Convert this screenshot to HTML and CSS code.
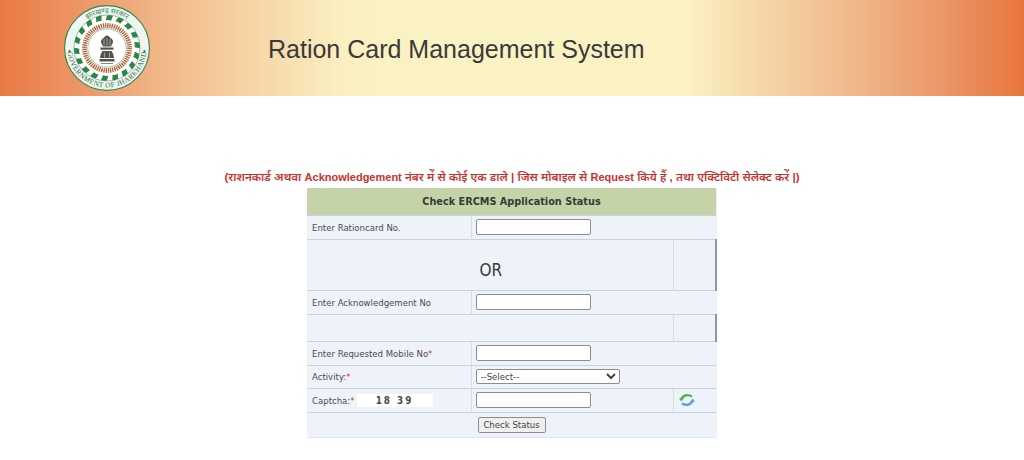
FILE: index.html
```html
<!DOCTYPE html>
<html lang="hi">
<head>
<meta charset="utf-8">
<title>Ration Card Management System</title>
<link rel="stylesheet" href="styles.css">
</head>
<body>
<header class="banner">
  <svg class="logo" viewBox="0 0 86 86" width="86" height="86" aria-label="Government of Jharkhand seal">
    <defs>
      <path id="arcTop" d="M8 43a35 35 0 0 1 70 0"/>
      <path id="arcBottom" d="M3.500 43a39.500 39.500 0 0 0 79 0"/>
      <path id="leaf" d="M43 10.500c2.500-.6 4.500-.4 6 .4l-2 4.800c-1.800-.7-3.600-.9-5.200-.6z" fill="#2a8547"/>
    </defs>
    <circle cx="43" cy="43" r="42.400" fill="#eef6ef" stroke="#2f8a4e" stroke-width="1.100"/>
    <text class="seal-text"><textPath href="#arcTop" startOffset="50%" text-anchor="middle">झारखण्ड सरकार</textPath></text>
    <text class="seal-text seal-en"><textPath href="#arcBottom" startOffset="50%" text-anchor="middle">GOVERNMENT OF JHARKHAND</textPath></text>
    <circle cx="43" cy="43" r="33" fill="#fff" stroke="#2f8a4e" stroke-width="0.500"/>
    <g>
      <use href="#leaf"/><use href="#leaf" transform="rotate(20 43 43)"/><use href="#leaf" transform="rotate(40 43 43)"/>
      <use href="#leaf" transform="rotate(60 43 43)"/><use href="#leaf" transform="rotate(80 43 43)"/><use href="#leaf" transform="rotate(100 43 43)"/>
      <use href="#leaf" transform="rotate(120 43 43)"/><use href="#leaf" transform="rotate(140 43 43)"/><use href="#leaf" transform="rotate(160 43 43)"/>
      <use href="#leaf" transform="rotate(180 43 43)"/><use href="#leaf" transform="rotate(200 43 43)"/><use href="#leaf" transform="rotate(220 43 43)"/>
      <use href="#leaf" transform="rotate(240 43 43)"/><use href="#leaf" transform="rotate(260 43 43)"/><use href="#leaf" transform="rotate(280 43 43)"/>
      <use href="#leaf" transform="rotate(300 43 43)"/><use href="#leaf" transform="rotate(320 43 43)"/><use href="#leaf" transform="rotate(340 43 43)"/>
    </g>
    <circle cx="43" cy="43" r="22.500" fill="none" stroke="#c7623a" stroke-width="4.800" stroke-dasharray="1.300 .9"/>
    <circle cx="43" cy="43" r="22.500" fill="none" stroke="#3c8a52" stroke-width="1.200" stroke-dasharray="1.300 3.100"/>
    <circle cx="43" cy="43" r="19.200" fill="#fff" stroke="#2f8a4e" stroke-width="0.500"/>
    <circle cx="5.500" cy="46" r="1.100" fill="#2f6e45"/>
    <circle cx="80.500" cy="46" r="1.100" fill="#2f6e45"/>
    <g transform="translate(0 1.500)">
      <g fill="#55554f">
        <path d="M37 35.500c-.3-2.300 1.700-3.700 3-4.200.5-1.200 1.600-2.300 3-2.300s2.500 1.100 3 2.300c1.300.5 3.300 1.900 3 4.200-.2 1.700-1.400 3-2 4.500h-8c-.6-1.500-1.800-2.800-2-4.500z"/>
        <path d="M36.500 41h13v2.200h-13z"/>
        <path d="M38.500 44.500h9c1.400 2 2.300 4.300 2.500 7h-14c.2-2.700 1.100-5 2.500-7z"/>
        <path d="M35.500 52.500h15v2.500h-15z"/>
        <path d="M37 56.500h12v1h-12z" fill="#85847e"/>
      </g>
      <path d="M40 32.500v6.500M43 31.500v7.500M46 32.500v6.500M40.500 46v5M45.500 46v5" stroke="#f0f0ec" stroke-width=".5" fill="none"/>
    </g>
  </svg>
  <h1 class="title">Ration Card Management System</h1>
</header>
<main class="content">
  <p class="notice">(राशनकार्ड अथवा <b>Acknowledgement</b> नंबर में से कोई एक डाले | जिस मोबाइल से <b>Request</b> किये हैं , तथा एक्टिविटी सेलेक्ट करें |)</p>
  <table class="status-table">
    <colgroup><col class="col-label"><col class="col-field"><col class="col-extra"></colgroup>
    <tr class="row-head"><th colspan="3">Check ERCMS Application Status</th></tr>
    <tr class="row"><td>Enter Rationcard No.</td><td colspan="2"><input class="field" type="text"></td></tr>
    <tr class="row-or"><td colspan="2" class="or-cell"><span class="or">OR</span></td><td class="edge"></td></tr>
    <tr class="row"><td>Enter Acknowledgement No</td><td colspan="2"><input class="field" type="text"></td></tr>
    <tr class="row-blank"><td colspan="2"></td><td class="edge"></td></tr>
    <tr class="row"><td>Enter Requested Mobile No<span class="req">*</span></td><td colspan="2"><input class="field" type="text"></td></tr>
    <tr class="row row-short"><td>Activity:<span class="req">*</span></td><td colspan="2"><select class="picker"><option>--Select--</option></select></td></tr>
    <tr class="row">
      <td>Captcha:<span class="req">*</span><span class="captcha">18 39</span></td>
      <td><input class="field" type="text"></td>
      <td class="refresh-cell">
        <svg class="refresh" viewBox="0 0 16 14" width="16" height="14" aria-label="Refresh captcha">
          <path d="M2.500 6.500C3.500 2.500 8.500 .8 13 3.500" fill="none" stroke="#4bb74a" stroke-width="2.400"/>
          <path d="M0 5l5 .2-2.800 3.300z" fill="#4bb74a"/>
          <path d="M13.500 7.500C12.500 11.500 7.500 13.200 3 10.500" fill="none" stroke="#5aa6d6" stroke-width="2.400"/>
          <path d="M16 9l-5-.2 2.800-3.300z" fill="#5aa6d6"/>
        </svg>
      </td>
    </tr>
    <tr class="row row-tall"><td colspan="3" class="actions"><button class="submit" type="button">Check Status</button></td></tr>
  </table>
</main>
</body>
</html>
```
FILE: styles.css
```css
html, body { margin: 0; padding: 0; background: #fff; }
body { font-family: "DejaVu Sans Condensed", "DejaVu Sans", Verdana, sans-serif; font-stretch: condensed; overflow: hidden; }

.banner {
  height: 96px;
  display: flex;
  align-items: center;
  padding-left: 64px;
  background: linear-gradient(to right, #ea7a45 0%, #ee9e6f 10%, #f2bd8e 17%, #f6d6a8 25%, #fbeec0 33%, #fbf2c4 38%, #fbf2c4 67%, #f6dfb0 72%, #f2c498 80%, #eeaa7c 87%, #ea9160 93.500%, #e9753d 100%);
}
.logo { flex: none; margin-top: -1px; }
.seal-text { font-family: "Noto Sans", "Liberation Serif", serif; font-size: 7px; fill: #4a7a5c; }
.seal-en { font-family: "Liberation Serif", serif; font-size: 7.200px; font-weight: normal; letter-spacing: .4px; fill: #35664a; }
.title {
  margin: 0 0 0 118px;
  font: normal 25px "Liberation Sans", Arial, sans-serif;
  color: #3a3a3a;
  position: relative;
  top: 1px;
}

.content { display: flex; flex-direction: column; align-items: center; }
.notice {
  margin: 73px 0 0;
  height: 19px;
  line-height: 17px;
  font-family: "Liberation Sans", "Noto Sans", "Noto Sans Devanagari", sans-serif;
  font-size: 11.550px;
  font-weight: 600;
  color: #c8322e;
  white-space: nowrap;
}
.notice b { font-size: 11px; }

.status-table {
  width: 410px;
  table-layout: fixed;
  border-collapse: collapse;
  background: #eef3fa;
  color: #4a4a4a;
  font-size: 9.500px;
  border-bottom: 1px solid #dfe3ea;
}
.col-label { width: 164px; }
.col-extra { width: 42px; }
.status-table td { padding: 0 0 1px 5px; border-top: 1px solid #ccd2dc; vertical-align: middle; }
.status-table td + td { border-left: 1px solid #d6dbe4; padding-left: 4px; }
.row-head th {
  height: 27px;
  padding: 0;
  background: #c5d3a9;
  color: #333d33;
  font-size: 10.800px;
  font-weight: bold;
}
.row td { height: 22px; }
.row-short td { height: 21px; }
.row-tall td { height: 23px; }
.row-or td { height: 49px; }
.row-blank td { height: 25px; }
.or-cell { text-align: center; }
.or { font-size: 17px; color: #3b3b3b; position: relative; left: -2px; top: 5px; }
.status-table td.edge { border-right: 2px solid #8f959e; }
.field {
  display: block;
  box-sizing: border-box;
  width: 115px;
  height: 16px;
  padding: 0 2px;
  margin: 0;
  background: #fff;
  border: 1px solid #8d8d8d;
  border-radius: 2px;
}
.picker {
  display: block;
  box-sizing: border-box;
  width: 144px;
  height: 15px;
  margin: 0;
  padding: 0;
  font: inherit;
  font-size: 9.500px;
  color: #444;
  background: #fff;
  border: 1px solid #8d8d8d;
  border-radius: 2px;
}
.req { color: #d9363a; }
.captcha {
  display: inline-block;
  width: 76px;
  margin-left: 2px;
  background: #fff;
  text-align: center;
  font-size: 9.800px;
  font-weight: bold;
  letter-spacing: 2px;
  line-height: 13px;
  color: #4a4a4a;
}
.refresh-cell { text-align: left; }
.refresh { display: block; margin-left: 1px; }
.actions { text-align: center; }
.status-table td.actions { padding: 0 0 1px; }
.submit {
  box-sizing: border-box;
  height: 16px;
  width: 68px;
  padding: 0;
  font: inherit;
  font-size: 9.500px;
  color: #444;
  background: #efefef;
  border: 1px solid #8d8d8d;
  border-radius: 2px;
}
```
